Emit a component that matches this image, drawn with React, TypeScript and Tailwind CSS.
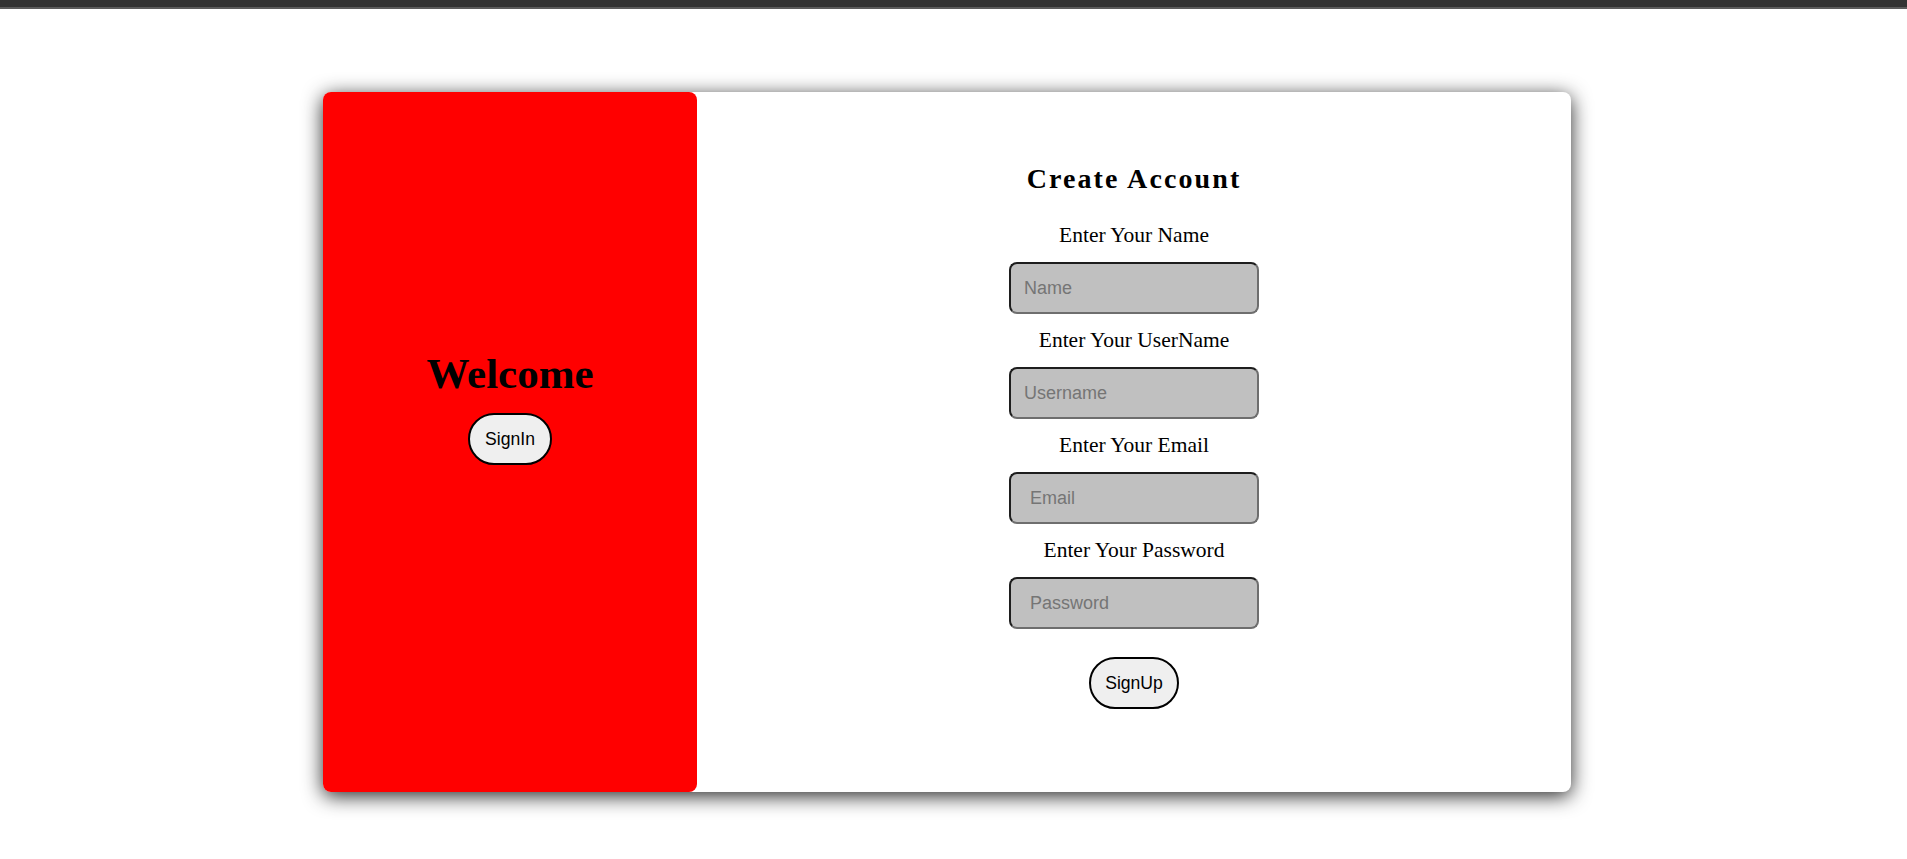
import { useState } from "react";

const serif = "font-['Liberation_Serif','Times_New_Roman',serif]";
const sans = "font-['Liberation_Sans',Arial,sans-serif]";

interface FieldProps {
  label: string;
  placeholder: string;
  type?: string;
  first?: boolean;
  wide?: boolean;
}

const Field = ({ label, placeholder, type = "text", first, wide }: FieldProps) => {
  const [value, setValue] = useState("");
  return (
    <>
      <p
        className={`${serif} text-[21.5px] leading-[23px] text-black ${
          first ? "mt-[30px]" : "mt-[15px]"
        }`}
      >
        {label}
      </p>
      <input
        type={type}
        value={value}
        onChange={(e) => setValue(e.currentTarget.value)}
        placeholder={placeholder}
        className={`${sans} mt-[15px] w-[250px] h-[52px] rounded-[8px] border-2 border-t-[#1e1e1e] border-l-[#1e1e1e] border-b-[#6e6e6e] border-r-[#6e6e6e] bg-[#c0c0c0] text-[18px] text-black placeholder:text-[#757575] outline-none ${
          wide ? "pl-[19px]" : "pl-[13px]"
        }`}
      />
    </>
  );
};

const App = () => {
  return (
    <div className="min-h-screen bg-white">
      <div className="h-[9px] bg-[#333333] border-b-2 border-[#5c5c5c]"></div>
      <div className="mt-[83px] ml-[323px] w-[1248px] h-[700px] flex rounded-[8px] bg-white shadow-[0_4px_20px_rgba(0,0,0,0.85)]">
        <div className="w-[374px] h-full flex flex-col items-center pt-[258px] bg-[#ff0000] rounded-[8px]">
          <h1 className={`${serif} text-[43px] leading-[48px] font-bold text-black`}>
            Welcome
          </h1>
          <button
            className={`${sans} mt-[15px] h-[52px] px-[15px] rounded-full border-2 border-black bg-[#efefef] text-[17.6px] text-black`}
          >
            SignIn
          </button>
        </div>
        <div className="flex-1 flex flex-col items-center pt-[71px]">
          <h2
            className={`${serif} text-[28px] leading-[31px] font-bold tracking-[2.1px] text-black`}
          >
            Create Account
          </h2>
          <Field label="Enter Your Name" placeholder="Name" first />
          <Field label="Enter Your UserName" placeholder="Username" />
          <Field label="Enter Your Email" placeholder="Email" type="email" wide />
          <Field label="Enter Your Password" placeholder="Password" type="password" wide />
          <button
            className={`${sans} mt-[28px] w-[90px] h-[52px] rounded-full border-2 border-black bg-[#efefef] text-[17.6px] text-black`}
          >
            SignUp
          </button>
        </div>
      </div>
    </div>
  );
};

export default App;
